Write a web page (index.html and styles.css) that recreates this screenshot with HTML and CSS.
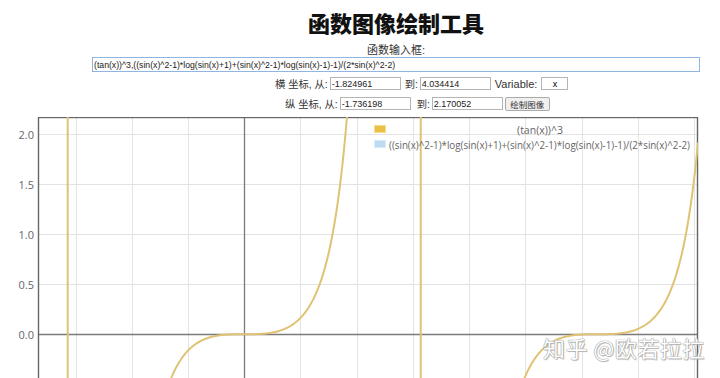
FILE: index.html
```html
<!DOCTYPE html>
<html lang="zh">
<head>
    <meta charset="UTF-8">
    <meta name="viewport" content="width=device-width, initial-scale=1.0">
    <title>函数图像绘制工具</title>
    <link rel="stylesheet" href="styles.css">
</head>
<body>
    <div class="header">
        <h1 class="title">函数图像绘制工具</h1>
        <div class="field-label">函数输入框:</div>
        <input class="func-input" type="text" value="(tan(x))^3,((sin(x)^2-1)*log(sin(x)+1)+(sin(x)^2-1)*log(sin(x)-1)-1)/(2*sin(x)^2-2)">

        <div class="range-row row-x">
            <span class="label">横 坐标, 从:</span>
            <input class="num-input" type="text" value="-1.824961">
            <span class="label">到:</span>
            <input class="num-input" type="text" value="4.034414">
            <span class="label label-en">Variable:</span>
            <input class="var-input" type="text" value="x">
        </div>
        <div class="range-row row-y">
            <span class="label">纵 坐标, 从:</span>
            <input class="num-input" type="text" value="-1.736198">
            <span class="label">到:</span>
            <input class="num-input" type="text" value="2.170052">
            <button class="draw-btn">绘制图像</button>
        </div>
    </div>

    <div class="chart">
        <svg id="plot" class="plot" width="720" height="391"></svg>
        <div class="watermark">知乎 @欧若拉拉</div>
    </div>

    <script src="script.js"></script>
</body>
</html>
```

FILE: styles.css
```css
body {
    margin: 0;
    background-color: #fff;
    font-family: 'Liberation Sans', 'Noto Sans CJK SC', sans-serif;
    color: #222;
    overflow: hidden;
}
.header {
    box-sizing: border-box;
    width: 720px;
    padding-left: 72px;
    text-align: center;
}
.title {
    margin: 0;
    padding-top: 9px;
    font-family: 'Noto Sans CJK SC', sans-serif;
    font-size: 22px;
    line-height: 27px;
    font-weight: 900;
    color: #111;
}
.field-label {
    margin-top: 7px;
    font-size: 11px;
    line-height: 14px;
    color: #333;
}
.func-input {
    display: block;
    box-sizing: border-box;
    width: 608px;
    height: 15px;
    margin: 0 auto;
    padding: 0 1px;
    border: 1px solid #8fb6e0;
    font-family: 'Liberation Sans', sans-serif;
    font-size: 8.7px;
    color: #222;
    outline: none;
}
.range-row {
    display: flex;
    align-items: center;
    height: 13px;
}
.row-x {
    padding-left: 203px;
    margin-top: 5px;
}
.row-y {
    padding-left: 213px;
    margin-top: 7px;
}
.label {
    font-size: 10.3px;
    color: #333;
    margin-right: 2px;
    white-space: pre;
}
.label-en {
    font-size: 11px;
    margin-right: 4px;
}
.num-input {
    box-sizing: border-box;
    width: 71px;
    height: 13px;
    padding: 0 1px;
    margin-right: 4px;
    border: 1px solid #b5b5b5;
    font-family: 'Liberation Sans', sans-serif;
    font-size: 9px;
    color: #222;
}
.row-y .num-input {
    margin-right: 6px;
}
.row-y .num-input:last-of-type {
    margin-right: 2px;
}
.var-input {
    box-sizing: border-box;
    width: 27px;
    height: 13px;
    padding: 0;
    border: 1px solid #b5b5b5;
    text-align: center;
    font-family: 'Liberation Sans', sans-serif;
    font-size: 9px;
}
.draw-btn {
    box-sizing: border-box;
    height: 14px;
    width: 45px;
    padding: 0;
    border: 1px solid #aaa;
    border-radius: 2px;
    background-color: #f0f0f0;
    font-family: 'Noto Sans CJK SC', sans-serif;
    font-size: 8.5px;
    color: #333;
}
.chart {
    position: relative;
    height: 262px;
    margin-top: 7px;
    overflow: hidden;
}
.plot {
    display: block;
    font-family: 'Open Sans', sans-serif;
}
.plot .tick {
    font-size: 11px;
    fill: #666;
}
.plot .legend-text {
    font-size: 10.5px;
    fill: #666;
}
.watermark {
    position: absolute;
    left: 543px;
    top: 218px;
    font-family: 'Noto Sans CJK SC', sans-serif;
    font-size: 22px;
    line-height: 24px;
    color: #fff;
    letter-spacing: 0.5px;
    text-shadow: 0 0 1px #8a8a8a, 0 0 1px #8a8a8a, 1px 1px 1px #bbb;
}
```

FILE: script.js
```js
const NS = 'http://www.w3.org/2000/svg';
const svg = document.getElementById('plot');

const view = { xMin: -1.824961, xMax: 4.034414, yMin: -1.736198, yMax: 2.170052 };
const box = { left: 39, top: 0, width: 659, height: 391 };

function px(x) { return box.left + (x - view.xMin) / (view.xMax - view.xMin) * box.width; }
function py(y) { return box.top + (view.yMax - y) / (view.yMax - view.yMin) * box.height; }

function el(name, attrs, text) {
    const node = document.createElementNS(NS, name);
    for (const k in attrs) node.setAttribute(k, attrs[k]);
    if (text) node.textContent = text;
    svg.appendChild(node);
    return node;
}

// clip for the curves
const defs = el('defs', {});
const clip = document.createElementNS(NS, 'clipPath');
clip.setAttribute('id', 'plot-area');
const clipRect = document.createElementNS(NS, 'rect');
clipRect.setAttribute('x', box.left);
clipRect.setAttribute('y', box.top);
clipRect.setAttribute('width', box.width);
clipRect.setAttribute('height', box.height);
clip.appendChild(clipRect);
defs.appendChild(clip);

// grid
for (let v = -1.5; v <= 4.01; v += 0.5) {
    if (Math.abs(v) < 1e-9) continue;
    const x = Math.round(px(v)) + 0.5;
    el('line', { x1: x, y1: 0, x2: x, y2: box.height, stroke: '#e3e3e3', 'stroke-width': 1 });
}
for (let v = -1.5; v <= 2.01; v += 0.5) {
    const y = Math.round(py(v)) + 0.5;
    if (Math.abs(v) > 1e-9) {
        el('line', { x1: box.left, y1: y, x2: box.left + box.width, y2: y, stroke: '#e3e3e3', 'stroke-width': 1 });
    }
    // labels below zero fall outside the visible part of the chart
    if (v > -1e-9) {
        el('text', { x: 34, y: y + 4, 'text-anchor': 'end', class: 'tick' }, v.toFixed(1));
    }
}

// axes
const x0 = Math.round(px(0)) + 0.5;
const y0 = Math.round(py(0)) + 0.5;
el('line', { x1: x0, y1: 0, x2: x0, y2: box.height, stroke: '#7a7a7a', 'stroke-width': 1.3 });
el('line', { x1: box.left, y1: y0, x2: box.left + box.width, y2: y0, stroke: '#7a7a7a', 'stroke-width': 1.3 });

// frame
el('rect', { x: box.left - 0.5, y: 0.5, width: box.width, height: box.height, fill: 'none', stroke: '#666', 'stroke-width': 1.4 });

// curve: (tan(x))^3
const steps = 700;
let d = '';
for (let i = 0; i <= steps; i++) {
    const x = view.xMin + (view.xMax - view.xMin) * i / steps;
    let y = Math.pow(Math.tan(x), 3);
    y = Math.max(-60, Math.min(60, y));
    d += (i === 0 ? 'M' : 'L') + px(x).toFixed(2) + ' ' + py(y).toFixed(2);
}
el('path', { d: d, fill: 'none', stroke: '#dfc273', 'stroke-width': 2, 'stroke-linejoin': 'round', 'clip-path': 'url(#plot-area)' });

// legend
el('rect', { x: 374.5, y: 8.5, width: 11, height: 7, fill: '#e9bf45', stroke: '#f4dc93', 'stroke-width': 1 });
el('text', { x: 540, y: 17, 'text-anchor': 'middle', class: 'legend-text' }, '(tan(x))^3');
el('rect', { x: 374.5, y: 23.5, width: 11, height: 7, fill: '#bddcf3', stroke: '#d9eaf8', 'stroke-width': 1 });
el('text', { x: 389, y: 32, class: 'legend-text', textLength: 301, lengthAdjust: 'spacingAndGlyphs' },
    '((sin(x)^2-1)*log(sin(x)+1)+(sin(x)^2-1)*log(sin(x)-1)-1)/(2*sin(x)^2-2)');
```
